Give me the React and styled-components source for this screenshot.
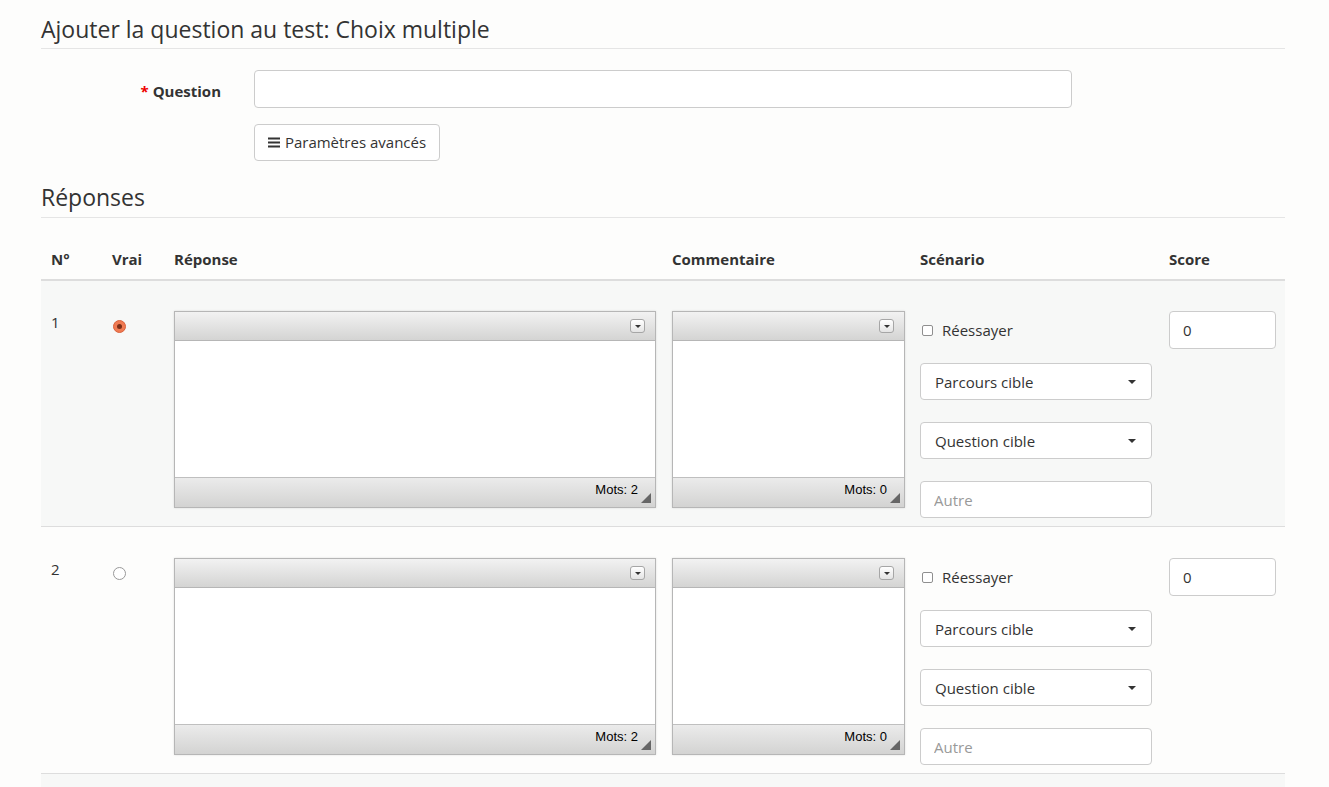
import React from 'react';
import styled, { createGlobalStyle } from 'styled-components';

const GlobalStyle = createGlobalStyle`
  html, body {
    margin: 0;
    padding: 0;
    background: #fdfdfc;
  }
  body {
    font-family: "Open Sans", "Liberation Sans", sans-serif;
    font-size: 15px;
    color: #333;
  }
  * { box-sizing: border-box; }
`;

const Page = styled.div`
  width: 1244px;
  margin-left: 41px;
  padding-top: 13px;
`;

const Legend = styled.div`
  font-size: 23px;
  line-height: 32px;
  color: #333;
  padding-bottom: ${(p) => p.$pb || 3}px;
  border-bottom: 1px solid #e5e5e5;
  margin-bottom: ${(p) => p.$mb || 0}px;
`;

const FormRow = styled.div`
  display: grid;
  grid-template-columns: 213px 818px;
  align-items: center;
`;

const Label = styled.label`
  text-align: right;
  padding-right: 33px;
  padding-top: 3px;
  font-weight: 700;
  font-size: 15px;
`;

const Star = styled.span`
  color: #e00;
  margin-right: 4px;
`;

const TextInput = styled.input`
  height: ${(p) => p.$h || 38}px;
  width: ${(p) => p.$w || '100%'};
  border: 1px solid #ccc;
  border-radius: 4px;
  background: #fff;
  padding: 0 13px;
  font-family: inherit;
  font-size: 15px;
  color: #333;
  outline: none;
  &::placeholder { color: #999; }
`;

const ButtonRow = styled.div`
  padding-left: 213px;
  margin-top: 16px;
  margin-bottom: 20px;
`;

const Button = styled.button`
  height: 37px;
  width: 186px;
  display: inline-flex;
  align-items: center;
  justify-content: center;
  gap: 5px;
  border: 1px solid #ccc;
  border-radius: 4px;
  background: #fff;
  font-family: inherit;
  font-size: 15px;
  color: #333;
  padding: 0 0 1px;
`;

const Grid = styled.div`
  display: grid;
  grid-template-columns: 61px 62px 498px 248px 249px 126px;
`;

const HeadRow = styled(Grid)`
  margin-top: 29px;
  border-bottom: 2px solid #ddd;
`;

const Th = styled.div`
  font-weight: 700;
  padding: 0 10px 8px;
  line-height: 24px;
`;

const Row = styled(Grid)`
  background: ${(p) => (p.$striped ? '#f7f8f7' : 'transparent')};
  border-bottom: 1px solid #ddd;
  min-height: ${(p) => p.$minH || 0}px;
`;

const Td = styled.div`
  padding: ${(p) => p.$pt}px 10px 8px;
`;

const Num = styled.div`
  margin-top: 1px;
  line-height: 20px;
`;

const Radio = styled.span`
  display: block;
  width: 13px;
  height: 13px;
  border-radius: 50%;
  margin: 9px 0 0 1px;
  border: 1px solid ${(p) => (p.$checked ? '#d9613c' : '#999')};
  background: ${(p) => (p.$checked ? '#f07a52' : '#fff')};
  position: relative;
  &::after {
    content: '';
    display: ${(p) => (p.$checked ? 'block' : 'none')};
    position: absolute;
    left: 3px;
    top: 3px;
    width: 5px;
    height: 5px;
    border-radius: 50%;
    background: #7a2f18;
  }
`;

const Editor = styled.div`
  width: ${(p) => p.$w}px;
  height: 197px;
  border: 1px solid #b6b6b6;
  display: flex;
  flex-direction: column;
  box-shadow: 0 0 2px rgba(0, 0, 0, 0.12);
  background: #fff;
`;

const EditorTop = styled.div`
  height: 29px;
  background: linear-gradient(#f2f2f2, #d4d4d3);
  border-bottom: 1px solid #b6b6b6;
  display: flex;
  justify-content: flex-end;
  align-items: center;
  padding-right: 10px;
`;

const ToolButton = styled.span`
  width: 15px;
  height: 14px;
  border: 1px solid #a6a6a6;
  border-radius: 3px;
  background: linear-gradient(#fff, #e4e4e4);
  display: flex;
  align-items: center;
  justify-content: center;
  &::after {
    content: '';
    border-left: 3px solid transparent;
    border-right: 3px solid transparent;
    border-top: 3px solid #333;
  }
`;

const EditorBody = styled.div`
  flex: 1;
  background: #fff;
`;

const EditorBottom = styled.div`
  height: 30px;
  background: linear-gradient(#ebebeb, #d3d3d2);
  border-top: 1px solid #bfbfbf;
  display: flex;
  justify-content: flex-end;
  align-items: center;
  padding-right: 4px;
  font-family: "Liberation Sans", Arial, sans-serif;
  font-size: 13px;
  color: #000;
  position: relative;
`;

const WordCount = styled.span`
  margin-right: 13px;
  margin-bottom: 6px;
`;

const Grip = styled.span`
  position: absolute;
  right: 4px;
  bottom: 4px;
  width: 0;
  height: 0;
  border-left: 10px solid transparent;
  border-bottom: 10px solid #666;
`;

const Scenario = styled.div`
  display: flex;
  flex-direction: column;
  width: 232px;
`;

const CheckLine = styled.label`
  display: flex;
  align-items: center;
  gap: 9px;
  line-height: 20px;
  margin: 9px 0 23px 2px;
`;

const Checkbox = styled.span`
  width: 11px;
  height: 11px;
  border: 1px solid #8f8f8f;
  border-radius: 2px;
  background: #fff;
`;

const Select = styled.div`
  height: 37px;
  border: 1px solid #ccc;
  border-radius: 4px;
  background: #fff;
  display: flex;
  align-items: center;
  justify-content: space-between;
  padding: 0 15px 0 14px;
  margin-bottom: 22px;
  &::after {
    content: '';
    border-left: 4px solid transparent;
    border-right: 4px solid transparent;
    border-top: 4px solid #333;
  }
`;

function RichEditor({ width, words }) {
  return (
    <Editor $w={width}>
      <EditorTop>
        <ToolButton />
      </EditorTop>
      <EditorBody />
      <EditorBottom>
        <WordCount>Mots: {words}</WordCount>
        <Grip />
      </EditorBottom>
    </Editor>
  );
}

function BarsIcon() {
  return (
    <svg width="12" height="11" viewBox="0 0 12 11">
      <rect x="0" y="0.5" width="12" height="2" fill="#333" />
      <rect x="0" y="4.5" width="12" height="2" fill="#333" />
      <rect x="0" y="8.5" width="12" height="2" fill="#333" />
    </svg>
  );
}

const answers = [
  { n: 1, checked: true, striped: true, pt: 30 },
  { n: 2, checked: false, striped: false, pt: 31 },
];

export default function App() {
  return (
    <>
      <GlobalStyle />
      <Page>
        <Legend $mb={21}>Ajouter la question au test: Choix multiple</Legend>
        <FormRow>
          <Label>
            <Star>*</Star>Question
          </Label>
          <TextInput type="text" />
        </FormRow>
        <ButtonRow>
          <Button>
            <BarsIcon />
            Paramètres avancés
          </Button>
        </ButtonRow>
        <Legend $pb={4}>Réponses</Legend>
        <HeadRow>
          <Th>N°</Th>
          <Th>Vrai</Th>
          <Th>Réponse</Th>
          <Th>Commentaire</Th>
          <Th>Scénario</Th>
          <Th>Score</Th>
        </HeadRow>
        {answers.map((a) => (
          <Row key={a.n} $striped={a.striped}>
            <Td $pt={a.pt}>
              <Num>{a.n}</Num>
            </Td>
            <Td $pt={a.pt}>
              <Radio $checked={a.checked} />
            </Td>
            <Td $pt={a.pt}>
              <RichEditor width={482} words={2} />
            </Td>
            <Td $pt={a.pt}>
              <RichEditor width={233} words={0} />
            </Td>
            <Td $pt={a.pt}>
              <Scenario>
                <CheckLine>
                  <Checkbox />
                  Réessayer
                </CheckLine>
                <Select>Parcours cible</Select>
                <Select>Question cible</Select>
                <TextInput type="text" placeholder="Autre" $h={37} />
              </Scenario>
            </Td>
            <Td $pt={a.pt}>
              <TextInput type="text" defaultValue="0" $w="107px" />
            </Td>
          </Row>
        ))}
        <Row $striped $minH={20} />
      </Page>
    </>
  );
}
